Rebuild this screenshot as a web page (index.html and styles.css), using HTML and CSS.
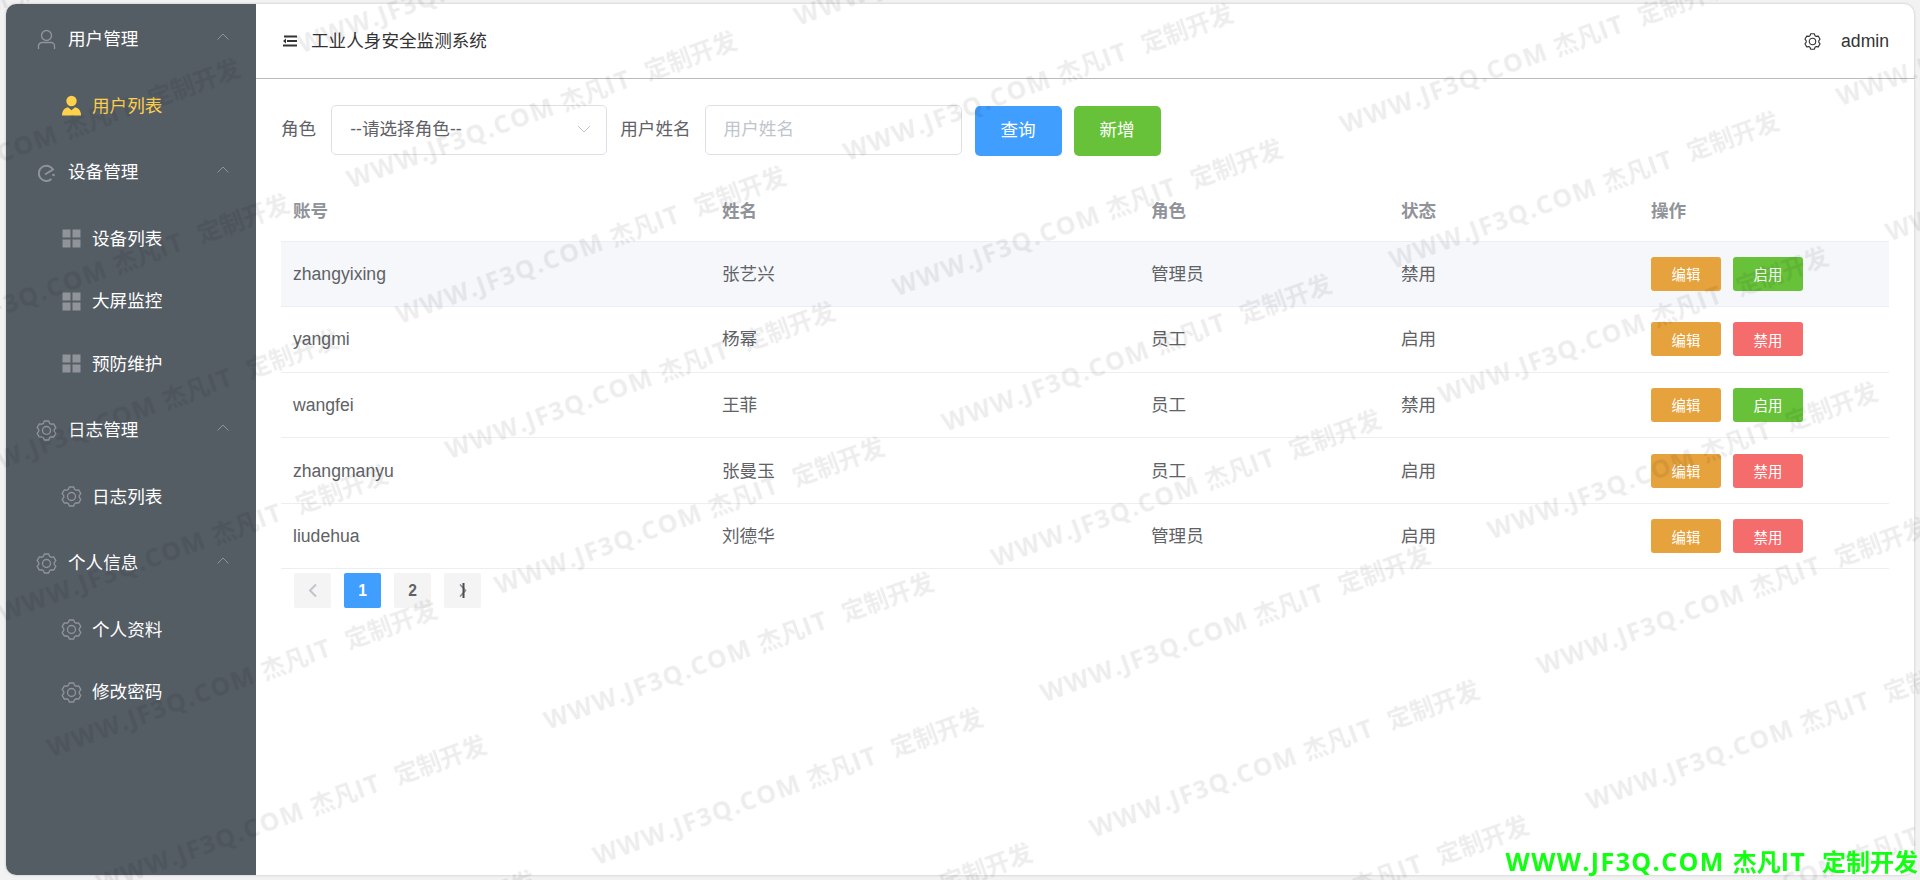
FILE: index.html
```html
<!DOCTYPE html>
<html lang="zh-CN">

<head>
  <meta charset="UTF-8">
  <title>工业人身安全监测系统</title>
  <link rel="stylesheet" href="styles.css">
</head>

<body>

  <svg class="sprite" width="0" height="0">
    <symbol id="i-user" viewBox="-1 -0.5 20 21">
      <circle cx="9" cy="6" r="5" fill="none" stroke="currentColor" stroke-width="1.4"/>
      <path d="M1 19.500v-3a3.500 3.500 0 0 1 3.500-3.500h9a3.500 3.500 0 0 1 3.500 3.500v3" fill="none" stroke="currentColor" stroke-width="1.4"/>
    </symbol>
    <symbol id="i-custom" viewBox="-0.5 -0.5 21 21">
      <circle cx="10" cy="5.500" r="5.200" fill="currentColor"/>
      <path d="M0.500 20c0-4.500 2-7.200 6-8.200l3.500 3 3.500-3c4 1 6 3.700 6 8.200z" fill="currentColor"/>
    </symbol>
    <symbol id="i-data" viewBox="-1.5 -1.5 21 21">
      <path d="M7.500 11l8-5a7.600 7.600 0 1 0-1.500 9.500" fill="none" stroke="currentColor" stroke-width="2"/>
      <circle cx="16" cy="11.500" r="1.300" fill="currentColor"/>
    </symbol>
    <symbol id="i-grid" viewBox="-1.5 -1.5 21 21">
      <path d="M0 0h8v8H0zM10 0h8v8h-8zM0 10h8v8H0zM10 10h8v8h-8z" fill="currentColor"/>
    </symbol>
    <symbol id="i-gear" viewBox="0 0 20 20">
      <path d="M6.990 3.240L7.910.94h4.180l.92 2.300 1.340.77 2.450-.35 2.090 3.620-1.530 1.950v1.540l1.530 1.950-2.090 3.620-2.450-.35-1.340.77-.92 2.300H7.910l-.92-2.300-1.340-.77-2.450.35-2.090-3.620 1.530-1.950V9.230L1.110 7.280 3.200 3.660l2.450.35z" fill="none" stroke="currentColor" stroke-width="1.300" stroke-linejoin="round"/>
      <circle cx="10" cy="10" r="3.800" fill="none" stroke="currentColor" stroke-width="1.300"/>
    </symbol>
    <symbol id="i-up" viewBox="0 0 12 7">
      <path d="M.5 6.500L6 1l5.500 5.500" fill="none" stroke="currentColor" stroke-width="1"/>
    </symbol>
  </svg>

  <div class="app">
    <aside class="sidebar">
      <ul class="menu">
        <li class="menu-title"><svg class="icon"><use href="#i-user"/></svg><span>用户管理</span><svg class="arrow"><use href="#i-up"/></svg></li>
        <li class="menu-item active"><svg class="icon"><use href="#i-custom"/></svg><span>用户列表</span></li>
        <li class="menu-title"><svg class="icon"><use href="#i-data"/></svg><span>设备管理</span><svg class="arrow"><use href="#i-up"/></svg></li>
        <li class="menu-item"><svg class="icon"><use href="#i-grid"/></svg><span>设备列表</span></li>
        <li class="menu-item tight"><svg class="icon"><use href="#i-grid"/></svg><span>大屏监控</span></li>
        <li class="menu-item tight"><svg class="icon"><use href="#i-grid"/></svg><span>预防维护</span></li>
        <li class="menu-title"><svg class="icon"><use href="#i-gear"/></svg><span>日志管理</span><svg class="arrow"><use href="#i-up"/></svg></li>
        <li class="menu-item"><svg class="icon"><use href="#i-gear"/></svg><span>日志列表</span></li>
        <li class="menu-title"><svg class="icon"><use href="#i-gear"/></svg><span>个人信息</span><svg class="arrow"><use href="#i-up"/></svg></li>
        <li class="menu-item"><svg class="icon"><use href="#i-gear"/></svg><span>个人资料</span></li>
        <li class="menu-item tight"><svg class="icon"><use href="#i-gear"/></svg><span>修改密码</span></li>
      </ul>
    </aside>

    <main class="main">
      <header class="topbar">
        <div class="brand">
          <svg class="fold" viewBox="0 0 14 12">
            <path d="M1 .500h13v2H1zM4 5h10v2H4zM0 9.500h14v2H0zM0 6l3-2.500v5z" fill="currentColor"/>
          </svg>
          <span>工业人身安全监测系统</span>
        </div>
        <div class="account">
          <svg class="account-icon"><use href="#i-gear"/></svg>
          <span>admin</span>
        </div>
      </header>

      <section class="content">
        <form class="search">
          <label>角色</label>
          <div class="select">
            <span>--请选择角色--</span>
            <svg class="select-arrow" viewBox="0 0 14 8"><path d="M1 1l6 6 6-6" fill="none" stroke="currentColor" stroke-width="1"/></svg>
          </div>
          <label>用户姓名</label>
          <input class="input" type="text" placeholder="用户姓名">
          <button class="btn btn-blue" type="button">查询</button>
          <button class="btn btn-green" type="button">新增</button>
        </form>

        <table class="table">
          <thead>
            <tr>
              <th class="col-name">账号</th>
              <th class="col-name">姓名</th>
              <th class="col-mid">角色</th>
              <th class="col-mid">状态</th>
              <th>操作</th>
            </tr>
          </thead>
          <tbody>
            <tr class="hover">
              <td>zhangyixing</td>
              <td>张艺兴</td>
              <td>管理员</td>
              <td>禁用</td>
              <td><button class="mini mini-orange" type="button">编辑</button><button class="mini mini-green" type="button">启用</button></td>
            </tr>
            <tr>
              <td>yangmi</td>
              <td>杨幂</td>
              <td>员工</td>
              <td>启用</td>
              <td><button class="mini mini-orange" type="button">编辑</button><button class="mini mini-red" type="button">禁用</button></td>
            </tr>
            <tr>
              <td>wangfei</td>
              <td>王菲</td>
              <td>员工</td>
              <td>禁用</td>
              <td><button class="mini mini-orange" type="button">编辑</button><button class="mini mini-green" type="button">启用</button></td>
            </tr>
            <tr>
              <td>zhangmanyu</td>
              <td>张曼玉</td>
              <td>员工</td>
              <td>启用</td>
              <td><button class="mini mini-orange" type="button">编辑</button><button class="mini mini-red" type="button">禁用</button></td>
            </tr>
            <tr>
              <td>liudehua</td>
              <td>刘德华</td>
              <td>管理员</td>
              <td>启用</td>
              <td><button class="mini mini-orange" type="button">编辑</button><button class="mini mini-red" type="button">禁用</button></td>
            </tr>
          </tbody>
        </table>

        <div class="pager">
          <span class="page page-off"><svg class="page-arrow" viewBox="0 0 8 15"><path d="M7 1.500l-6 6 6 6" fill="none" stroke="currentColor" stroke-width="2"/></svg></span>
          <span class="page page-on">1</span>
          <span class="page">2</span>
          <span class="page"><svg class="page-arrow" viewBox="0 0 8 15"><path d="M1 1.500l5.500 6-5.500 6" fill="none" stroke="#8a8d93" stroke-width="1.600"/><path d="M4.500 0v15" fill="none" stroke="#4a4d53" stroke-width="2"/></svg></span>
        </div>
      </section>
    </main>
  </div>

  <!-- marca de agua -->
  <svg class="watermark" width="1920" height="880">
    <defs>
      <pattern id="wm" width="476" height="144" patternUnits="userSpaceOnUse" patternTransform="translate(513.800 636) rotate(-20)">
        <text class="wm-text" x="0" y="100"><tspan class="latin">WWW.JF3Q.COM </tspan>杰凡<tspan class="latin">IT  </tspan>定制开发</text>
      </pattern>
    </defs>
    <rect width="1920" height="880" fill="url(#wm)"/>
  </svg>
  <div class="stamp"><span class="latin">WWW.JF3Q.COM </span>杰凡<span class="latin">IT  </span>定制开发</div>

</body>

</html>
```

FILE: styles.css
```css
* {
  box-sizing: border-box;
}

html,
body {
  height: 100%;
}

body {
  margin: 0;
  padding: 4px 6px 5px;
  overflow: hidden;
  background-color: #f2f2f2;
  color: #606266;
  font-family: "Liberation Sans", "Noto Sans CJK SC", sans-serif;
  font-size: 17.6px;
  line-height: 24px;
}

.sprite {
  position: absolute;
}

.app {
  display: flex;
  height: 100%;
  border-radius: 10px;
  overflow: hidden;
  background-color: #fff;
  box-shadow: 0 0 3px rgba(0, 0, 0, 0.2);
}

/* menu lateral */
.sidebar {
  flex: 0 0 250px;
  background-color: #545c64;
  color: #fff;
}

.menu {
  list-style: none;
  margin: 0;
  padding: 2px 0 0;
}

.menu-title,
.menu-item {
  display: flex;
  align-items: center;
  height: 66.5px;
}

.menu-title {
  padding-left: 30px;
  padding-right: 27px;
}

.menu-item {
  padding-left: 55px;
}

.menu-item.tight {
  margin-top: -4px;
}

.menu-item.active {
  color: #ffd04b;
}

.icon {
  flex: none;
  width: 21px;
  height: 21px;
  margin-right: 11px;
  color: #909399;
}

.menu-item .icon {
  margin-right: 10px;
}

.active .icon {
  color: #ffd04b;
}

.arrow {
  width: 12px;
  height: 7px;
  margin-left: auto;
  margin-top: -6px;
  color: #909399;
}

/* barra superior */
.main {
  flex: 1;
  min-width: 0;
  display: flex;
  flex-direction: column;
}

.topbar {
  flex: none;
  height: 75px;
  padding: 0 25px 0 27px;
  display: flex;
  align-items: center;
  justify-content: space-between;
  border-bottom: 1px solid #bbb;
  color: #333;
}

.brand {
  display: flex;
  align-items: center;
  gap: 14px;
}

.fold {
  width: 14px;
  height: 12px;
}

.account {
  display: flex;
  align-items: center;
  gap: 20px;
}

.account-icon {
  width: 17px;
  height: 17px;
}

/* contenido */
.content {
  padding: 25px 25px 0;
}

.search {
  display: flex;
  align-items: center;
  height: 52px;
}

.search label {
  margin-bottom: 2px;
  color: #606266;
}

.select {
  width: 276px;
  height: 50px;
  margin: 0 13px 0 15px;
  padding: 0 20px 2px 18px;
  display: flex;
  align-items: center;
  justify-content: space-between;
  border: 1px solid #dcdfe6;
  border-radius: 5px;
  color: #606266;
}

.select-arrow {
  width: 14px;
  height: 8px;
  margin-right: -5px;
  color: #c0c4cc;
}

.input {
  width: 257px;
  height: 50px;
  margin-left: 14px;
  padding: 0 18px 2px;
  border: 1px solid #dcdfe6;
  border-radius: 5px;
  outline: none;
  background: transparent;
  font: inherit;
}

.input::placeholder {
  color: #c0c4cc;
}

.btn {
  width: 87px;
  height: 50px;
  margin-top: 2px;
  margin-left: 13px;
  padding: 0 0 3px;
  border: none;
  border-radius: 5px;
  color: #fff;
  font: inherit;
}

.btn + .btn {
  margin-left: 12px;
}

.btn-blue {
  background-color: #409eff;
}

.btn-green {
  background-color: #67c23a;
}

/* tabla */
.table {
  width: 1608px;
  margin-top: 24px;
  border-collapse: collapse;
  table-layout: fixed;
}

.table th {
  height: 61px;
  padding: 2px 12px 0;
  text-align: left;
  color: #909399;
  font-weight: bold;
}

.col-name {
  width: 429px;
}

.col-mid {
  width: 250px;
}

.table td {
  height: 65.6px;
  padding: 0 12px;
  border-bottom: 1px solid #ebeef5;
}

.table thead tr {
  border-bottom: 1px solid #ebeef5;
}

.table .hover td {
  background-color: #f5f7fa;
}

.mini {
  width: 70px;
  height: 34px;
  padding: 0;
  margin-right: 12px;
  border: none;
  border-radius: 3px;
  color: #fff;
  font-family: inherit;
  font-size: 14.4px;
  vertical-align: middle;
}

.mini-orange {
  background-color: #e6a23c;
}

.mini-green {
  background-color: #67c23a;
}

.mini-red {
  background-color: #f56c6c;
}

/* paginacion */
.pager {
  display: flex;
  gap: 13px;
  margin-top: 4px;
  padding-left: 13px;
}

.page {
  width: 37px;
  height: 35px;
  display: flex;
  align-items: center;
  justify-content: center;
  border-radius: 2px;
  background-color: #f4f4f5;
  color: #606266;
  font-size: 15.6px;
  font-weight: bold;
}

.page-on {
  background-color: #409eff;
  color: #fff;
}

.page-off {
  color: #c0c4cc;
}

.page-arrow {
  width: 8px;
  height: 15px;
}

/* marca de agua sobre toda la pagina */
.watermark {
  position: fixed;
  left: 0;
  top: 0;
  pointer-events: none;
}

.wm-text {
  fill: rgba(0, 0, 0, 0.07);
  font-family: "Open Sans", "Noto Sans CJK SC", sans-serif;
  font-size: 24px;
  font-weight: bold;
  white-space: pre;
}

.stamp {
  position: fixed;
  right: 2px;
  bottom: 2px;
  color: #11ff11;
  font-family: "Open Sans", "Noto Sans CJK SC", sans-serif;
  font-size: 24px;
  font-weight: bold;
  line-height: 32px;
  white-space: pre;
}

.latin {
  font-size: 25px;
  letter-spacing: 1.4px;
}
```
